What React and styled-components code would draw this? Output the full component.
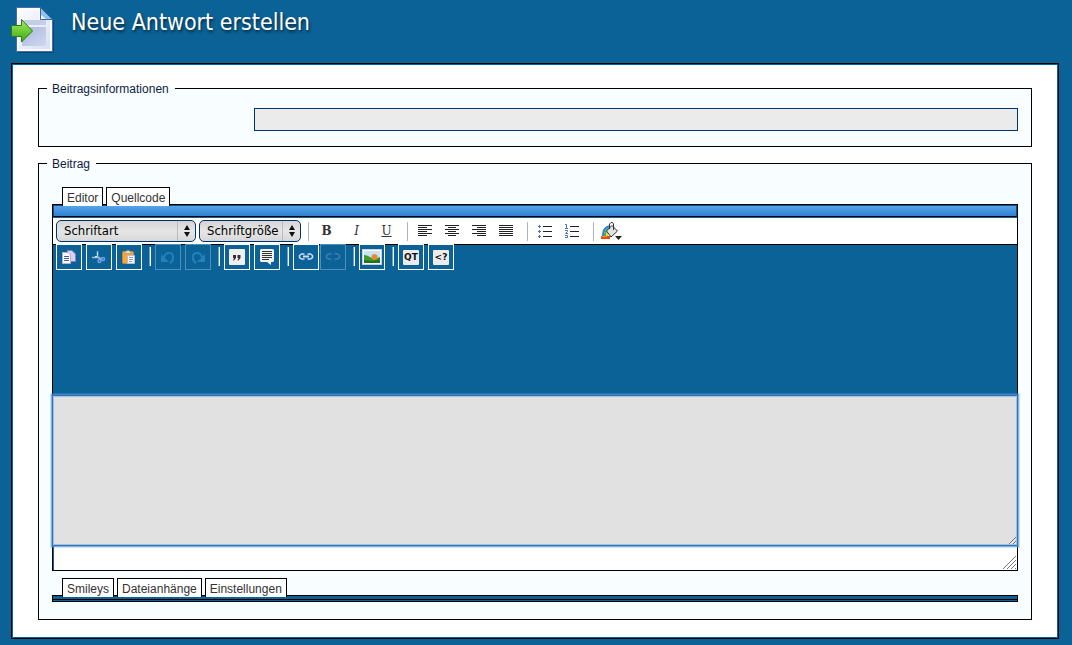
import React, { useState } from "react";
import styled, { createGlobalStyle } from "styled-components";

const GlobalStyle = createGlobalStyle`
  * {
    box-sizing: border-box;
  }
  body {
    margin: 0;
    background: #0b6296;
    font-family: "Liberation Sans", Arial, sans-serif;
    font-size: 12px;
    color: #333;
  }
`;

const PageIcon = () => (
  <svg width="48" height="48" viewBox="0 0 48 48" aria-hidden="true">
    <defs>
      <linearGradient id="paper" x1="0" y1="0" x2="1" y2="1">
        <stop offset="0" stopColor="#ffffff" />
        <stop offset="1" stopColor="#d5ddf2" />
      </linearGradient>
      <linearGradient id="block" x1="0" y1="0" x2="1" y2="1">
        <stop offset="0" stopColor="#a9b7dc" />
        <stop offset="1" stopColor="#cfd8ee" />
      </linearGradient>
      <linearGradient id="arrow" x1="0" y1="0" x2="0" y2="1">
        <stop offset="0" stopColor="#a5ee62" />
        <stop offset="1" stopColor="#3aa80f" />
      </linearGradient>
    </defs>
    <path d="M10 5H34L46 16V48H10Z" fill="#063d66" opacity=".7" />
    <path d="M8.500 2.500H32.500L44.500 14.500V46.500H8.500Z" fill="url(#paper)" stroke="#4c6aa8" />
    <path d="M10 4H32V14H43V45H10Z" fill="none" stroke="#fff" strokeWidth="1.500" />
    <path d="M32.500 2.500L44.500 14.500H32.500Z" fill="#8fc1ea" stroke="#3f62a3" />
    <path d="M33 10V14H38Z" fill="#eef6ff" />
    <path d="M14 15H38V20H14Z" fill="#c3cee8" />
    <path d="M14 22H38V41H14Z" fill="url(#block)" />
    <path d="M3.500 20.500H13.500V14.500L24.500 26L13.500 37V31.500H3.500Z" fill="url(#arrow)" stroke="#2c7a12" />
  </svg>
);

const CopyIcon = () => (
  <svg width="16" height="16" viewBox="0 0 16 16">
    <path d="M6.500 1.500H11L14.500 5V12.500H6.500Z" fill="#d7d2f0" stroke="#8f7fc4" />
    <path d="M1.500 3.500H7L9.500 6V14.500H1.500Z" fill="#fff" stroke="#b5addb" />
    <path d="M3 7.500H8M3 9.500H8M3 11.500H8" stroke="#4a5f99" />
  </svg>
);

const CutIcon = () => (
  <svg width="16" height="16" viewBox="0 0 16 16" fill="none">
    <path d="M6.500 2V8L10 10M1 8.500H8L10 11" stroke="#9fc0dd" strokeWidth="1.500" />
    <path d="M4 7.500H6M6.500 4V6" stroke="#dcebf7" />
    <circle cx="8.500" cy="12" r="1.500" stroke="#6d9fee" strokeWidth="1.500" />
    <circle cx="12" cy="10" r="1.500" stroke="#6d9fee" strokeWidth="1.500" />
  </svg>
);

const PasteIcon = () => (
  <svg width="16" height="16" viewBox="0 0 16 16">
    <rect x="1.500" y="2.500" width="11" height="12" rx="1" fill="#f5a637" stroke="#d98318" />
    <path d="M4 4.500V2.500H5.500V1.500H8.500V2.500H10V4.500Z" fill="#e6e0cf" stroke="#8b8577" strokeWidth=".5" />
    <path d="M6.500 6.500H13.500V14.500H6.500Z" fill="#f3f6fd" stroke="#b6bfd4" />
    <path d="M8 8.500H12M8 10.500H12M8 12.500H11" stroke="#8f9dbb" />
  </svg>
);

const TurnIcon = ({ flip }) => (
  <svg width="16" height="16" viewBox="0 0 16 16" fill="none">
    <g transform={flip ? "translate(16 0) scale(-1 1)" : undefined}>
      <path d="M4 8C6 2 14 3 13 9C13 11 12 13 10 14" stroke="#2380bd" strokeWidth="2" />
      <path d="M1 5V13H9Z" fill="#2380bd" />
    </g>
  </svg>
);

const QuoteIcon = () => (
  <svg width="16" height="16" viewBox="0 0 16 16">
    <rect x="0" y="0" width="16" height="16" rx="1" fill="#f0f0f0" />
    <path d="M4 6H7V9L5 11.500H4L5 9H4ZM8.500 6H11.500V9L9.500 11.500H8.500L9.500 9H8.500Z" fill="#333" />
  </svg>
);

const SpeechIcon = () => (
  <svg width="16" height="16" viewBox="0 0 16 16">
    <path d="M2 0H14L15 1V12L14 13H12V16L8 13H2L1 12V1Z" fill="#f4f4f4" />
    <path d="M3 2.500H13M3 4.500H13M3 6.500H13M3 8.500H13M3 10.500H10" stroke="#333" />
  </svg>
);

const LinkIcon = ({ broken }) => (
  <svg width="16" height="16" viewBox="0 0 16 16" fill="none" stroke={broken ? "#3d7fb4" : "#d0dcf5"}>
    <path d="M6.500 5H3.500L1.500 6.500V8.500L3.500 10H6.500M9.500 5H12.500L14.500 6.500V8.500L12.500 10H9.500" strokeWidth="1.500" />
    {broken ? (
      <path d="M5 2L7 4M11 2L9 4M5 13L7 11M11 13L9 11" opacity=".4" />
    ) : (
      <path d="M5 7.500H11" strokeWidth="2" />
    )}
  </svg>
);

const ImageIcon = () => (
  <svg width="20" height="16" viewBox="0 0 20 16">
    <rect x=".5" y=".5" width="19" height="15" fill="#fff" stroke="#c9d2d8" />
    <path d="M2 2H18V14H2Z" fill="#c4e5f6" />
    <path d="M2 6C6 6 9 9 12 10L18 8V14H2Z" fill="#3f9b2d" />
    <circle cx="12.500" cy="8" r="3" fill="#f08632" />
    <path d="M2 11C7 12 13 12 18 10V14H2Z" fill="#227322" />
  </svg>
);

const alignRows = {
  left: [[0, 14], [0, 9], [0, 14], [0, 9], [0, 14], [0, 9]],
  center: [[0, 14], [3, 11], [0, 14], [3, 11], [0, 14], [3, 11]],
  right: [[0, 14], [5, 14], [0, 14], [5, 14], [0, 14], [5, 14]],
  full: [[0, 14], [0, 14], [0, 14], [0, 14], [0, 14], [0, 14]],
};

const AlignIcon = ({ kind }) => (
  <svg width="15" height="12" viewBox="0 0 15 12" stroke="#222">
    {alignRows[kind].map(([from, to], i) => (
      <path key={i} d={`M${from} ${i * 2 + 0.5}H${to}`} />
    ))}
  </svg>
);

const ListIcon = ({ numbered }) => (
  <svg width="15" height="14" viewBox="0 0 15 14">
    <path d="M5 2.500H14M5 7.500H14M5 12.500H14" stroke="#222" />
    {numbered ? (
      <path d="M0 .5H1.500V4M0 4.500H3M0 6.500H2.500V7.500L.5 9.500H3M0 11.500H2.500V13.500H0" fill="none" stroke="#4a6fb5" />
    ) : (
      <path d="M0 2.500H3M1.500 1V4M0 7.500H3M1.500 6V9M0 12.500H3M1.500 11V14" stroke="#4a6fb5" />
    )}
  </svg>
);

const PaintIcon = () => (
  <svg width="21" height="18" viewBox="0 0 21 18">
    <path d="M9 4C4 5 2 9 2 14" fill="none" stroke="#2f7be0" strokeWidth="2" />
    <path d="M9 6C6 7 4 10 4 14" fill="none" stroke="#35b54a" strokeWidth="2" />
    <path d="M9 8C7 9 6 11 6 14" fill="none" stroke="#f4d21f" strokeWidth="2" />
    <path d="M0 15.500H9" stroke="#ea4a12" strokeWidth="3" />
    <path d="M1 14.500H6" stroke="#f59a1b" />
    <path d="M5.500 9L11 3.500L16.500 9L10 15Z" fill="#e3e3e3" stroke="#333" />
    <path d="M8.500 7V2L10 .5H11.500L12.500 2V8" fill="none" stroke="#333" />
    <path d="M14 14H21L17.500 18Z" fill="#222" />
  </svg>
);

const Grip = ({ size, lines }) => (
  <svg width={size} height={size} viewBox={`0 0 ${size} ${size}`} stroke="#777" aria-hidden="true">
    {lines.map((n) => (
      <path key={n} d={`M${size - n} ${size}L${size} ${size - n}`} />
    ))}
  </svg>
);

const Picker = ({ label, options, width }) => (
  <PickerBox $width={width}>
    <PickerSelect aria-label={label}>
      <option>{label}</option>
      {options.map((option) => (
        <option key={option}>{option}</option>
      ))}
    </PickerSelect>
    <PickerArrows>
      <svg width="6" height="12" viewBox="0 0 6 12" fill="#111">
        <path d="M0 5L3 0L6 5ZM0 7H6L3 12Z" />
      </svg>
    </PickerArrows>
  </PickerBox>
);

const App = () => {
  const [subject, setSubject] = useState("");
  const [text, setText] = useState("");

  return (
    <>
      <GlobalStyle />
      <Header>
        <PageIcon />
        <Title>Neue Antwort erstellen</Title>
      </Header>

      <Panel>
        <Group>
          <Legend>Beitragsinformationen</Legend>
          <InfoRow>
            <SubjectInput
              type="text"
              aria-label="Betreff"
              value={subject}
              onChange={(e) => setSubject(e.target.value)}
            />
          </InfoRow>
        </Group>

        <Group>
          <Legend>Beitrag</Legend>
          <PostBody>
            <Tabs>
              <Tab type="button">Editor</Tab>
              <Tab type="button">Quellcode</Tab>
            </Tabs>
            <Editor>
              <GradientBar />
              <FormatBar>
                <Pickers>
                  <Picker label="Schriftart" options={["Arial", "Courier"]} width={140} />
                  <Picker label="Schriftgröße" options={["12", "14"]} width={102} />
                </Pickers>
                <Divider />
                <Letters>
                  <FormatButton type="button" aria-label="Fett"><b>B</b></FormatButton>
                  <FormatButton type="button" aria-label="Kursiv"><i>I</i></FormatButton>
                  <FormatButton type="button" aria-label="Unterstrichen"><u>U</u></FormatButton>
                </Letters>
                <Divider />
                {Object.keys(alignRows).map((kind) => (
                  <FormatButton key={kind} type="button" aria-label={kind}>
                    <AlignIcon kind={kind} />
                  </FormatButton>
                ))}
                <Divider />
                <FormatButton type="button" aria-label="Liste"><ListIcon /></FormatButton>
                <FormatButton type="button" aria-label="Nummerierte Liste"><ListIcon numbered /></FormatButton>
                <Divider />
                <FormatButton type="button" aria-label="Farbe"><PaintIcon /></FormatButton>
              </FormatBar>

              <ActionBar>
                <Actions>
                  <ActionButton type="button" aria-label="Kopieren"><CopyIcon /></ActionButton>
                  <ActionButton type="button" aria-label="Ausschneiden"><CutIcon /></ActionButton>
                  <ActionButton type="button" aria-label="Einfügen"><PasteIcon /></ActionButton>
                </Actions>
                <ActionDivider />
                <Actions>
                  <ActionButton type="button" disabled aria-label="Rückgängig"><TurnIcon /></ActionButton>
                  <ActionButton type="button" disabled aria-label="Wiederholen"><TurnIcon flip /></ActionButton>
                </Actions>
                <ActionDivider />
                <Actions>
                  <ActionButton type="button" aria-label="Zitat"><QuoteIcon /></ActionButton>
                  <ActionButton type="button" aria-label="Kommentar"><SpeechIcon /></ActionButton>
                </Actions>
                <ActionDivider />
                <Actions $tight>
                  <ActionButton type="button" aria-label="Link"><LinkIcon /></ActionButton>
                  <ActionButton type="button" disabled aria-label="Link entfernen"><LinkIcon broken /></ActionButton>
                </Actions>
                <ActionDivider />
                <ActionButton type="button" aria-label="Bild"><ImageIcon /></ActionButton>
                <ActionDivider />
                <Actions>
                  <ActionButton type="button"><Chip>QT</Chip></ActionButton>
                  <ActionButton type="button"><Chip>&lt;?</Chip></ActionButton>
                </Actions>
              </ActionBar>

              <TextWrap>
                <TextBox
                  aria-label="Beitrag"
                  rows={8}
                  value={text}
                  onChange={(e) => setText(e.target.value)}
                />
                <TextGrip>
                  <Grip size={8} lines={[3, 7]} />
                </TextGrip>
              </TextWrap>
              <StatusBar>
                <Grip size={14} lines={[1, 5, 9, 13]} />
              </StatusBar>
            </Editor>

            <Tabs $bottom>
              <Tab type="button">Smileys</Tab>
              <Tab type="button">Dateianhänge</Tab>
              <Tab type="button">Einstellungen</Tab>
            </Tabs>
            <BottomBar />
          </PostBody>
        </Group>
      </Panel>
    </>
  );
};

export default App;

const Header = styled.header`
  display: flex;
  align-items: flex-start;
  gap: 15px;
  height: 63px;
  padding: 5px 8px;
`;

const Title = styled.h1`
  margin: 0;
  padding-top: 2px;
  font-family: "DejaVu Sans Condensed", Tahoma, sans-serif;
  font-size: 23px;
  font-weight: 400;
  line-height: 30px;
  color: #fff;
  text-shadow: 1px 2px 3px rgba(0, 0, 0, 0.6);
`;

const Panel = styled.main`
  margin: 0 13px 6px 11px;
  padding: 17px 26px 18px;
  border: 1px solid #000;
  box-shadow: inset 0 0 0 1px #0b6296;
  background: #fff;
`;

const Group = styled.fieldset`
  min-width: 0;
  margin: 0;
  padding: 0 8px;
  border: 1px solid #000;
  background: #f8feff;

  & + & {
    margin-top: 9px;
  }
`;

const Legend = styled.legend`
  padding: 2px 6px 0 5px;
  line-height: 13px;
  color: #0f1c3f;
`;

const InfoRow = styled.div`
  display: flex;
  padding: 12px 5px 15px;
`;

const SubjectInput = styled.input`
  flex: 1;
  height: 23px;
  margin-left: 202px;
  padding: 0 4px;
  border: 1px solid #003366;
  background: #ebebeb;
  font: inherit;
`;

const PostBody = styled.div`
  padding: 16px 5px 17px;
`;

const Tabs = styled.div`
  position: relative;
  display: flex;
  gap: 3px;
  margin: ${(props) => (props.$bottom ? "7px 10px -2px" : "0 10px -2px")};
`;

const Tab = styled.button`
  height: 19px;
  padding: 2px 4px 0;
  border: 1px solid #000;
  border-bottom: 0;
  background: #fff;
  font: inherit;
  line-height: 16px;
  color: #333;
  cursor: pointer;
`;

const Editor = styled.div`
  border: 1px solid #000;
  background: #0b6296;
`;

const GradientBar = styled.div`
  height: 12px;
  border: 1px solid #0b4f88;
  border-bottom: 1px solid #000;
  background: linear-gradient(#56a5ea, #2f7fd0);
`;

const FormatBar = styled.div`
  display: flex;
  align-items: center;
  height: 28px;
  padding: 0 3px;
  border-top: 1px solid #0b6296;
  border-bottom: 1px solid #000;
  background: #fff;
`;

const Pickers = styled.div`
  display: flex;
  gap: 3px;
`;

const PickerBox = styled.div`
  position: relative;
  width: ${(props) => props.$width}px;
`;

const PickerSelect = styled.select`
  display: block;
  width: 100%;
  height: 22px;
  padding: 0 7px 1px;
  appearance: none;
  border: 1px solid #003366;
  border-radius: 5px;
  background: linear-gradient(#d4d4d4, #e6e6e6 50%, #d8d8d8);
  font-family: "DejaVu Sans Condensed", "Lucida Grande", sans-serif;
  font-size: 13px;
  color: #000;
`;

const PickerArrows = styled.span`
  position: absolute;
  top: 1px;
  right: 1px;
  bottom: 1px;
  display: flex;
  align-items: center;
  justify-content: center;
  width: 18px;
  border-left: 1px solid #bbb;
  pointer-events: none;
`;

const Divider = styled.span`
  width: 1px;
  height: 19px;
  margin: 0 4px 0 7px;
  background: #a9b3c9;
`;

const Letters = styled.div`
  display: flex;
  gap: 3px;
`;

const FormatButton = styled.button`
  display: flex;
  align-items: center;
  justify-content: center;
  width: 27px;
  height: 22px;
  padding: 0;
  border: 0;
  background: none;
  font-family: "DejaVu Serif", serif;
  font-size: 12px;
  color: #333;
  cursor: pointer;
`;

const ActionBar = styled.div`
  position: relative;
  display: flex;
  align-items: flex-start;
  height: 150px;
  margin-top: -1px;
  margin-bottom: 1px;
  padding: 0 3px;
`;

const Actions = styled.div`
  display: flex;
  gap: ${(props) => (props.$tight ? 1 : 4)}px;
`;

const ActionDivider = styled.span`
  width: 2px;
  height: 19px;
  margin: 3px 4px 0 7px;
  border-right: 1px solid #fff;
  background: #6ba0c4;
`;

const ActionButton = styled.button`
  display: flex;
  align-items: center;
  justify-content: center;
  width: 26px;
  height: 26px;
  padding: 0;
  border: 1px solid #fff;
  background: #0b6296;
  cursor: pointer;

  &:disabled {
    border-color: #4b8fba;
    cursor: default;
  }
`;

const Chip = styled.span`
  display: flex;
  align-items: center;
  justify-content: center;
  width: 16px;
  height: 15px;
  border-radius: 1px;
  background: #ececec;
  font-family: "DejaVu Sans", sans-serif;
  font-size: 9px;
  font-weight: 700;
  line-height: 15px;
  color: #111;
`;

const TextWrap = styled.div`
  position: relative;
  margin: 0 -1px;
`;

const TextBox = styled.textarea`
  display: block;
  width: 100%;
  height: 151px;
  padding: 4px;
  resize: none;
  outline: none;
  border: 1px solid #2f73b8;
  background: #e1e1e1;
  box-shadow: 0 0 0 1px rgba(80, 145, 215, 0.6), 0 0 0 2px rgba(100, 160, 225, 0.3),
    inset 0 0 0 1px #9fc1e4;
  font: inherit;
`;

const TextGrip = styled.span`
  position: absolute;
  right: 2px;
  bottom: 2px;
  display: flex;
  pointer-events: none;
`;

const StatusBar = styled.div`
  display: flex;
  align-items: flex-end;
  justify-content: flex-end;
  height: 24px;
  padding: 0 1px 1px 0;
  border-left: 1px solid #0b6296;
  background: #fff;
`;

const BottomBar = styled.div`
  height: 7px;
  border: 1px solid #000;
  background: linear-gradient(#0b6296 3px, #000 3px, #000 4px, #0b6296 4px);
`;
